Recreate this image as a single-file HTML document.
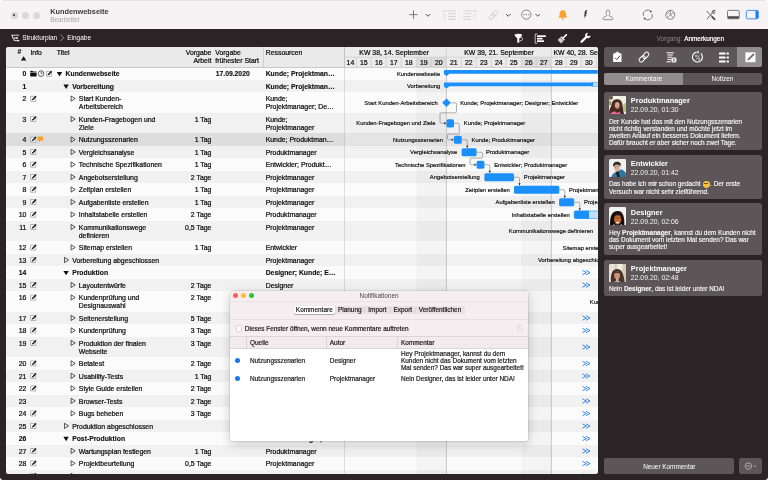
<!DOCTYPE html>
<html lang="de"><head><meta charset="utf-8"><title>Kundenwebseite</title>
<style>
*{box-sizing:border-box;margin:0;padding:0}
html,body{width:768px;height:480px;overflow:hidden;background:#fff}
body{font-family:"Liberation Sans",sans-serif;font-size:6.9px;color:#0d0d0d;position:relative;-webkit-font-smoothing:antialiased}
.a{position:absolute}
.t{position:absolute;white-space:nowrap;line-height:8.2px;height:8.2px}
.b{font-weight:bold}
#panel .b{font-size:6.8px}
#panel .t{-webkit-text-stroke:0.22px #0d0d0d}
#panel .gl{-webkit-text-stroke:0.16px #0d0d0d}
#panel .t.b{-webkit-text-stroke:0.12px #0d0d0d}
#win{will-change:transform;position:absolute;left:0;top:0;width:768px;height:480px;background:linear-gradient(#f7f2f4 0,#f7f2f4 20px,#2c2326 20px);border-radius:4.5px 4.5px 3.5px 3.5px;overflow:hidden}
#tb{position:absolute;left:0;top:0;width:768px;height:28.8px;background:#f7f2f4}
#panel{position:absolute;left:6.4px;top:46.7px;width:591.4px;height:427.5px;background:#fdfdfd;border-radius:2.5px 2.5px 3px 3px;overflow:hidden}
.row{position:absolute;left:0;width:592px}
.hd{position:absolute;top:0;background:#eaeaea;border-right:1px solid #cfcfcf;height:20.4px}
.gl{position:absolute;white-space:nowrap;font-size:5.85px;line-height:7px;height:7px;color:#0c0c0c}
.card{position:absolute;left:604.2px;width:157.7px;background:#5c5658;border-radius:2.5px;color:#f1eeef}
.card .n{position:absolute;left:26.6px;top:4.6px;font-weight:bold;font-size:7.45px;line-height:9px;color:#fff;white-space:nowrap}
.card .d{position:absolute;left:26.6px;top:13.6px;font-size:6.9px;line-height:9px;color:#f4f2f3;white-space:nowrap}
.card .x{position:absolute;left:4.7px;top:25.85px;font-size:6.43px;line-height:7.05px;white-space:nowrap;color:#f6f4f5;-webkit-text-stroke:0.15px #f6f4f5}
.card svg{position:absolute;left:4.6px;top:4.1px}
.nt{position:absolute;white-space:nowrap;font-size:6.45px;line-height:7.3px;color:#1d1a1b;-webkit-text-stroke:0.2px #1d1a1b}
</style></head><body>
<div id="win">

<div id="tb">
<div class="a" style="left:0;top:0;width:768px;height:1px;background:#e4e1e2"></div>
<div class="a" style="left:10.5px;top:11.5px;width:7px;height:7px;border-radius:50%;background:#dcd8da"></div>
<div class="a" style="left:21.5px;top:11.5px;width:7px;height:7px;border-radius:50%;background:#dcd8da"></div>
<div class="a" style="left:32.5px;top:11.5px;width:7px;height:7px;border-radius:50%;background:#dcd8da"></div>
<div class="a" style="left:13.1px;top:14.1px;width:1.8px;height:1.8px;border-radius:50%;background:#3a3638"></div>
<div class="t b" style="left:50.2px;top:7.2px;font-size:7.35px;line-height:9px;height:9px;color:#3b3739">Kundenwebseite</div>
<div class="t" style="left:50.2px;top:15.9px;font-size:6.4px;line-height:8px;height:8px;color:#a8a3a5">Bearbeitet</div>
<svg class="a" style="left:0;top:0" width="768" height="29" viewBox="0 0 768 29">
<path d="M409.3 14.6 H417.7 M413.5 10.4 V18.8" stroke="#5a5658" stroke-width="0.75" fill="none"/>
<path d="M421.5 9.5 V20" stroke="#ebe5e8" stroke-width="0.6"/>
<path d="M426.1 14.3 l2 2 l2 -2" stroke="#4a4648" stroke-width="0.95" fill="none" stroke-linecap="round" stroke-linejoin="round"/>
<g stroke="#cbc6c8" stroke-width="0.7" fill="none">
<path d="M442.2 10.9 H455.8 M448 13.7 H455.8 M448 16.5 H455.8 M448 19.3 H455.8"/>
<path d="M442.8 13.2 L445.6 16.4 L442.8 19.6"/>
<path d="M459.4 9.5 V20" stroke="#ebe5e8" stroke-width="0.6"/>
<path d="M463.2 10.9 H476.8 M463.2 13.7 H471 M463.2 16.5 H471 M463.2 19.3 H471"/>
<path d="M476.2 13.2 L473.4 16.4 L476.2 19.6"/>
</g>
<g transform="translate(493.5 15) rotate(-45)" stroke="#cbc6c8" stroke-width="0.75" fill="none">
<rect x="-5.6" y="-1.9" width="6.6" height="3.8" rx="1.9"/><rect x="-1" y="-1.9" width="6.6" height="3.8" rx="1.9"/>
</g>
<path d="M502.8 9.5 V20" stroke="#ebe5e8" stroke-width="0.6"/>
<path d="M506.3 14.3 l2 2 l2 -2" stroke="#4a4648" stroke-width="0.95" fill="none" stroke-linecap="round" stroke-linejoin="round"/>
<circle cx="526.3" cy="14.6" r="4.6" stroke="#5a5658" stroke-width="0.7" fill="none"/>
<circle cx="524.2" cy="14.6" r="0.55" fill="#5a5658"/>
<circle cx="526.3" cy="14.6" r="0.55" fill="#5a5658"/>
<circle cx="528.4" cy="14.6" r="0.55" fill="#5a5658"/>
<path d="M535.8 14.3 l2 2 l2 -2" stroke="#4a4648" stroke-width="0.95" fill="none" stroke-linecap="round" stroke-linejoin="round"/>
<path d="M562.8 10.2 C565.3 10.2 566 12.2 566 14 C566 16 566.4 16.8 567.3 17.7 L558.3 17.7 C559.2 16.8 559.6 16 559.6 14 C559.6 12.2 560.3 10.2 562.8 10.2 Z" fill="#f9a12c"/>
<path d="M561.4 18.5 H564.2 A1.4 1.3 0 0 1 561.4 18.5 Z" fill="#f9a12c"/>
<path d="M585.5 10.3 L587.4 10.3 L586.1 12.8 L587.25 12.8 L585.6 15.3 L586.6 15.3 L583.75 18.5 L584.9 15.7 L583.9 15.7 L585 13.2 L584.1 13.2 Z" fill="#3e3a3c"/>
<path d="M606.2 13.6 V11.9 A1.75 1.8 0 0 1 609.7 11.9 V13.6 C609.7 14.6 609.1 14.8 609.1 15.4 C609.1 16.7 612.9 16.5 612.9 18.7 Q612.9 19.7 611.8 19.7 H604.1 Q603 19.7 603 18.7 C603 16.5 606.8 16.7 606.8 15.4 C606.8 14.8 606.2 14.6 606.2 13.6 Z" stroke="#6a6668" stroke-width="0.7" fill="none"/>
<g stroke="#5a5658" stroke-width="0.75" fill="none">
<path d="M643.3 15.9 A4.5 4.5 0 0 1 651 11.6"/><path d="M652.2 14.1 A4.5 4.5 0 0 1 644.5 18.4"/>
</g>
<path d="M649.8 10.5 L652.3 11 L650.6 12.9 Z M645.7 19.5 L643.2 19 L644.9 17.1 Z" fill="#5a5658"/>
<circle cx="670.3" cy="14.8" r="4.5" stroke="#5a5658" stroke-width="0.7" fill="none"/>
<path d="M670.3 10.5 L670.3 14.8 L673.9 12.5 M670.3 14.8 L673.4 17.6 M670.3 14.8 L667.2 17.8 M669.2 11.5 L667 14.2" stroke="#5a5658" stroke-width="0.6" fill="none"/>
<g stroke="#4a4648" fill="none" stroke-linecap="round">
<path d="M706.9 11.2 L714.3 19" stroke-width="0.8"/>
<path d="M714.2 11 L707.2 18.8" stroke-width="0.8"/>
<path d="M712 12.3 L713 10.6 L714.9 10.4 M713.3 13.4 L715 12.5" stroke-width="0.9"/>
<path d="M712.2 16.8 L714.6 19.3" stroke-width="1.7"/>
</g>
<rect x="727.5" y="10.4" width="11.8" height="8.4" rx="1.3" stroke="#5a5658" stroke-width="0.75" fill="none"/>
<path d="M728 16.2 H738.8 V17.6 Q738.8 18.4 738 18.4 H728.8 Q728 18.4 728 17.6 Z" fill="#4a4648"/>
<rect x="746.3" y="10.4" width="12.1" height="8.4" rx="1.3" stroke="#1b7cf4" stroke-width="0.8" fill="none"/>
<path d="M755.5 10.8 H757.2 Q758 10.8 758 11.6 V17.6 Q758 18.4 757.2 18.4 H755.5 Z" fill="#1b7cf4"/>
</svg>
</div>
<svg class="a" style="left:0;top:28px" width="768" height="19" viewBox="0 28 768 19">
<g stroke="#fff" stroke-width="0.8" fill="none"><path d="M11 35.2 H19.2 M12.5 35.2 V38 H16.2 M14 38 V40.6 H17.6"/></g>
<rect x="15.8" y="37.3" width="2.2" height="1.4" fill="#fff"/><rect x="17" y="39.9" width="2.2" height="1.4" fill="#fff"/>
<path d="M60.4 34.6 L63.6 37.9 L60.4 41.2" stroke="#d8d4d6" stroke-width="0.6" fill="none"/>
<g transform="translate(0 0.6)">
<path d="M514.6 33.9 Q518.3 32.6 522 33.9 L522 35 L519.3 37.8 L519.3 42 L517.3 42.2 L517.3 37.8 L514.6 35 Z" fill="#fff"/>
<path d="M519.5 36.5 Q523 36 522.6 38.8 Q522 40.5 519.6 40.2" stroke="#fff" stroke-width="0.7" fill="none"/>
<path d="M535.2 33.4 V42.6 M535.2 33.4 H537.4 M535.2 42.6 H537.4" stroke="#fff" stroke-width="0.7" fill="none"/>
<rect x="537" y="34.7" width="8.8" height="1.7" fill="#fff"/><rect x="537" y="37.2" width="5.6" height="1.7" fill="#fff"/><rect x="537" y="39.7" width="7" height="1.7" fill="#fff"/>
<g transform="translate(562.5 38) rotate(45)"><rect x="-0.75" y="-6.2" width="1.5" height="5.4" rx="0.6" fill="#fff"/><rect x="-2.4" y="-0.9" width="4.8" height="1.5" fill="#fff"/><path d="M-2.4 1 H2.4 L2.4 4.4 L-2.4 4.4 Z" fill="#cfcbcd"/></g>
<g transform="translate(584.7 38) rotate(45)"><path d="M-1.15 -3 L-1.15 5 Q0 6.2 1.15 5 L1.15 -3 Z" fill="#fff"/><path d="M-2.6 -6 L-2.6 -3.6 Q-2.6 -2 0 -2 Q2.6 -2 2.6 -3.6 L2.6 -6 L1.1 -5.6 L1.1 -4 L-1.1 -4 L-1.1 -5.6 Z" fill="#fff"/></g>
</g>
</svg>
<div class="t" style="left:22.2px;top:34.2px;font-size:6.5px;color:#fff">Strukturplan</div>
<div class="t" style="left:67.2px;top:34.2px;font-size:6.5px;color:#fff">Eingabe</div>
<div id="panel">
<div class="row" style="top:20.7px;height:12.55px;background:#fbfbfb"></div>
<div class="row" style="top:33.2px;height:12.55px;background:#f1f1f1"></div>
<div class="row" style="top:45.7px;height:20.5px;background:#fbfbfb"></div>
<div class="row" style="top:66.15px;height:20.5px;background:#f1f1f1"></div>
<div class="row" style="top:86.6px;height:12.55px;background:#dddddd"></div>
<div class="row" style="top:99.1px;height:12.55px;background:#f1f1f1"></div>
<div class="row" style="top:111.6px;height:12.55px;background:#fbfbfb"></div>
<div class="row" style="top:124.1px;height:12.55px;background:#f1f1f1"></div>
<div class="row" style="top:136.6px;height:12.55px;background:#fbfbfb"></div>
<div class="row" style="top:149.1px;height:12.55px;background:#f1f1f1"></div>
<div class="row" style="top:161.6px;height:12.55px;background:#fbfbfb"></div>
<div class="row" style="top:174.1px;height:20.5px;background:#f1f1f1"></div>
<div class="row" style="top:194.55px;height:12.55px;background:#fbfbfb"></div>
<div class="row" style="top:207.05px;height:12.55px;background:#f1f1f1"></div>
<div class="row" style="top:219.55px;height:12.55px;background:#fbfbfb"></div>
<div class="row" style="top:232.05px;height:12.55px;background:#f1f1f1"></div>
<div class="row" style="top:244.55px;height:20.5px;background:#fbfbfb"></div>
<div class="row" style="top:265px;height:12.55px;background:#f1f1f1"></div>
<div class="row" style="top:277.5px;height:12.55px;background:#fbfbfb"></div>
<div class="row" style="top:290px;height:20.5px;background:#f1f1f1"></div>
<div class="row" style="top:310.45px;height:12.55px;background:#fbfbfb"></div>
<div class="row" style="top:322.95px;height:12.55px;background:#f1f1f1"></div>
<div class="row" style="top:335.45px;height:12.55px;background:#fbfbfb"></div>
<div class="row" style="top:347.95px;height:12.55px;background:#f1f1f1"></div>
<div class="row" style="top:360.45px;height:12.55px;background:#fbfbfb"></div>
<div class="row" style="top:372.95px;height:12.55px;background:#f1f1f1"></div>
<div class="row" style="top:385.45px;height:12.55px;background:#fbfbfb"></div>
<div class="row" style="top:397.95px;height:12.55px;background:#f1f1f1"></div>
<div class="row" style="top:410.45px;height:12.55px;background:#fbfbfb"></div>
<div class="row" style="top:422.95px;height:12.55px;background:#f1f1f1"></div>

<div class="hd" style="left:0px;width:22.4px"></div>
<div class="hd" style="left:21.9px;width:26.5px"></div>
<div class="hd" style="left:47.9px;width:110.7px"></div>
<div class="hd" style="left:158.1px;width:49.4px"></div>
<div class="hd" style="left:207px;width:50.9px"></div>
<div class="hd" style="left:257.4px;width:81.2px"></div>
<div class="a" style="left:0;top:20.4px;width:592px;height:0.6px;background:#c9c9c9"></div>
<div class="t b" style="left:11.2px;top:1.6px;">#</div>
<div class="t " style="left:24px;top:2px;">Info</div>
<div class="t " style="left:50.4px;top:2px;">Titel</div>
<div class="t " style="right:386.4px;top:2px;">Vorgabe</div>
<div class="t " style="right:386.4px;top:10.3px;">Arbeit</div>
<div class="t " style="left:208.9px;top:2px;">Vorgabe</div>
<div class="t " style="left:208.9px;top:10.3px;">frühester Start</div>
<div class="t " style="left:259.3px;top:2px;">Ressourcen</div>
<div class="t b" style="right:571.4px;top:23.6px;">0</div>
<div class="t b" style="left:59.2px;top:23.6px;">Kundenwebseite</div>
<div class="t b" style="left:209.3px;top:23.6px;">17.09.2020</div>
<div class="t b" style="left:259.3px;top:23.6px;">Kunde; Projektman…</div>
<div class="t b" style="right:571.4px;top:36.1px;">1</div>
<div class="t b" style="left:65.8px;top:36.1px;">Vorbereitung</div>
<div class="t b" style="left:259.3px;top:36.1px;">Kunde; Projektman…</div>
<div class="t " style="right:571.4px;top:48.6px;">2</div>
<div class="t " style="left:72.4px;top:48.6px;">Start Kunden-</div>
<div class="t " style="left:72.4px;top:56.8px;">Arbeitsbereich</div>
<div class="t " style="left:259.3px;top:48.6px;">Kunde;</div>
<div class="t " style="left:259.3px;top:56.8px;">Projektmanager; De…</div>
<div class="t " style="right:571.4px;top:69.05px;">3</div>
<div class="t " style="left:72.4px;top:69.05px;">Kunden-Fragebogen und</div>
<div class="t " style="left:72.4px;top:77.25px;">Ziele</div>
<div class="t " style="right:386.4px;top:69.05px;">1 Tag</div>
<div class="t " style="left:259.3px;top:69.05px;">Kunde;</div>
<div class="t " style="left:259.3px;top:77.25px;">Projektmanager</div>
<div class="t " style="right:571.4px;top:89.5px;">4</div>
<div class="t " style="left:72.4px;top:89.5px;">Nutzungsszenarien</div>
<div class="t " style="right:386.4px;top:89.5px;">1 Tag</div>
<div class="t " style="left:259.3px;top:89.5px;">Kunde; Produktman…</div>
<div class="t " style="right:571.4px;top:102px;">5</div>
<div class="t " style="left:72.4px;top:102px;">Vergleichsanalyse</div>
<div class="t " style="right:386.4px;top:102px;">1 Tag</div>
<div class="t " style="left:259.3px;top:102px;">Produktmanager</div>
<div class="t " style="right:571.4px;top:114.5px;">6</div>
<div class="t " style="left:72.4px;top:114.5px;">Technische Spezifikationen</div>
<div class="t " style="right:386.4px;top:114.5px;">1 Tag</div>
<div class="t " style="left:259.3px;top:114.5px;">Entwickler; Produkt…</div>
<div class="t " style="right:571.4px;top:127px;">7</div>
<div class="t " style="left:72.4px;top:127px;">Angebotserstellung</div>
<div class="t " style="right:386.4px;top:127px;">2 Tage</div>
<div class="t " style="left:259.3px;top:127px;">Projektmanager</div>
<div class="t " style="right:571.4px;top:139.5px;">8</div>
<div class="t " style="left:72.4px;top:139.5px;">Zeitplan erstellen</div>
<div class="t " style="right:386.4px;top:139.5px;">1 Tag</div>
<div class="t " style="left:259.3px;top:139.5px;">Projektmanager</div>
<div class="t " style="right:571.4px;top:152px;">9</div>
<div class="t " style="left:72.4px;top:152px;">Aufgabenliste erstellen</div>
<div class="t " style="right:386.4px;top:152px;">1 Tag</div>
<div class="t " style="left:259.3px;top:152px;">Projektmanager</div>
<div class="t " style="right:571.4px;top:164.5px;">10</div>
<div class="t " style="left:72.4px;top:164.5px;">Inhaltstabelle erstellen</div>
<div class="t " style="right:386.4px;top:164.5px;">2 Tage</div>
<div class="t " style="left:259.3px;top:164.5px;">Produktmanager</div>
<div class="t " style="right:571.4px;top:177px;">11</div>
<div class="t " style="left:72.4px;top:177px;">Kommunikationswege</div>
<div class="t " style="left:72.4px;top:185.2px;">definieren</div>
<div class="t " style="right:386.4px;top:177px;">0,5 Tage</div>
<div class="t " style="left:259.3px;top:177px;">Projektmanager</div>
<div class="t " style="right:571.4px;top:197.45px;">12</div>
<div class="t " style="left:72.4px;top:197.45px;">Sitemap erstellen</div>
<div class="t " style="right:386.4px;top:197.45px;">1 Tag</div>
<div class="t " style="left:259.3px;top:197.45px;">Entwickler</div>
<div class="t " style="right:571.4px;top:209.95px;">13</div>
<div class="t " style="left:65.8px;top:209.95px;">Vorbereitung abgeschlossen</div>
<div class="t " style="left:259.3px;top:209.95px;">Projektmanager</div>
<div class="t b" style="right:571.4px;top:222.45px;">14</div>
<div class="t b" style="left:65.8px;top:222.45px;">Produktion</div>
<div class="t b" style="left:259.3px;top:222.45px;">Designer; Kunde; E…</div>
<div class="t " style="right:571.4px;top:234.95px;">15</div>
<div class="t " style="left:72.4px;top:234.95px;">Layoutentwürfe</div>
<div class="t " style="right:386.4px;top:234.95px;">2 Tage</div>
<div class="t " style="left:259.3px;top:234.95px;">Designer</div>
<div class="t " style="right:571.4px;top:247.45px;">16</div>
<div class="t " style="left:72.4px;top:247.45px;">Kundenprüfung und</div>
<div class="t " style="left:72.4px;top:255.65px;">Designauswahl</div>
<div class="t " style="right:386.4px;top:247.45px;">2 Tage</div>
<div class="t " style="left:259.3px;top:247.45px;">Kunde</div>
<div class="t " style="right:571.4px;top:267.9px;">17</div>
<div class="t " style="left:72.4px;top:267.9px;">Seitenerstellung</div>
<div class="t " style="right:386.4px;top:267.9px;">5 Tage</div>
<div class="t " style="left:259.3px;top:267.9px;">Entwickler</div>
<div class="t " style="right:571.4px;top:280.4px;">18</div>
<div class="t " style="left:72.4px;top:280.4px;">Kundenprüfung</div>
<div class="t " style="right:386.4px;top:280.4px;">3 Tage</div>
<div class="t " style="left:259.3px;top:280.4px;">Kunde</div>
<div class="t " style="right:571.4px;top:292.9px;">19</div>
<div class="t " style="left:72.4px;top:292.9px;">Produktion der finalen</div>
<div class="t " style="left:72.4px;top:301.1px;">Webseite</div>
<div class="t " style="right:386.4px;top:292.9px;">3 Tage</div>
<div class="t " style="left:259.3px;top:292.9px;">Entwickler</div>
<div class="t " style="right:571.4px;top:313.35px;">20</div>
<div class="t " style="left:72.4px;top:313.35px;">Betatest</div>
<div class="t " style="right:386.4px;top:313.35px;">2 Tage</div>
<div class="t " style="left:259.3px;top:313.35px;">Kunde</div>
<div class="t " style="right:571.4px;top:325.85px;">21</div>
<div class="t " style="left:72.4px;top:325.85px;">Usability-Tests</div>
<div class="t " style="right:386.4px;top:325.85px;">1 Tag</div>
<div class="t " style="left:259.3px;top:325.85px;">Designer</div>
<div class="t " style="right:571.4px;top:338.35px;">22</div>
<div class="t " style="left:72.4px;top:338.35px;">Style Guide erstellen</div>
<div class="t " style="right:386.4px;top:338.35px;">2 Tage</div>
<div class="t " style="left:259.3px;top:338.35px;">Designer</div>
<div class="t " style="right:571.4px;top:350.85px;">23</div>
<div class="t " style="left:72.4px;top:350.85px;">Browser-Tests</div>
<div class="t " style="right:386.4px;top:350.85px;">2 Tage</div>
<div class="t " style="left:259.3px;top:350.85px;">Entwickler</div>
<div class="t " style="right:571.4px;top:363.35px;">24</div>
<div class="t " style="left:72.4px;top:363.35px;">Bugs beheben</div>
<div class="t " style="right:386.4px;top:363.35px;">3 Tage</div>
<div class="t " style="left:259.3px;top:363.35px;">Entwickler</div>
<div class="t " style="right:571.4px;top:375.85px;">25</div>
<div class="t " style="left:65.8px;top:375.85px;">Produktion abgeschlossen</div>
<div class="t " style="left:259.3px;top:375.85px;">Projektmanager</div>
<div class="t b" style="right:571.4px;top:388.35px;">26</div>
<div class="t b" style="left:65.8px;top:388.35px;">Post-Produktion</div>
<div class="t b" style="left:259.3px;top:388.35px;">Produktmanager; Pr…</div>
<div class="t " style="right:571.4px;top:400.85px;">27</div>
<div class="t " style="left:72.4px;top:400.85px;">Wartungsplan festlegen</div>
<div class="t " style="right:386.4px;top:400.85px;">1 Tag</div>
<div class="t " style="left:259.3px;top:400.85px;">Produktmanager</div>
<div class="t " style="right:571.4px;top:413.35px;">28</div>
<div class="t " style="left:72.4px;top:413.35px;">Projektbeurteilung</div>
<div class="t " style="right:386.4px;top:413.35px;">0,5 Tage</div>
<div class="t " style="left:259.3px;top:413.35px;">Projektmanager</div>
<div class="t " style="right:571.4px;top:425.85px;">29</div>
<div class="t " style="left:72.4px;top:425.85px;">Finale Präsentation</div>
<div class="t " style="right:386.4px;top:425.85px;">0,5 Tage</div>
<div class="t " style="left:259.3px;top:425.85px;">Kunde; Projektmana…</div>
<svg class="a" style="left:-0.4px;top:-0.7px" width="346" height="430" viewBox="6 46 346 430">
<g transform="translate(20.6 55.8) scale(1)"><path d="M0.3 4.6 L3 0.4 L5.7 4.6 Z" fill="#111"/></g>
<g transform="translate(56.5 71.8) scale(1)"><path d="M0.3 0.3 L5.7 0.3 L3 4.7 Z" fill="#111"/></g>
<g transform="translate(46 70.3) scale(0.1)"><rect x="5" y="9" width="50" height="50" fill="#fff" stroke="#8a8a8a" stroke-width="6"/><path d="M14 50 L20 36 L52 4 L62 14 L30 46 Z" fill="#111"/></g>
<g transform="translate(30 70.6) scale(0.1)"><path d="M2 6 Q2 2 6 2 L24 2 L30 9 L62 9 Q66 9 66 13 L66 18 L2 18 Z M2 23 L66 23 L66 54 Q66 58 62 58 L6 58 Q2 58 2 54 Z" fill="#111"/></g>
<g transform="translate(37.8 70.3) scale(0.1)"><circle cx="33" cy="33" r="28" fill="#fff" stroke="#111" stroke-width="7"/><path d="M33 33 L33 16 M33 33 L47 27" stroke="#111" stroke-width="6" fill="none"/></g>
<g transform="translate(63.1 84.3) scale(1)"><path d="M0.3 0.3 L5.7 0.3 L3 4.7 Z" fill="#111"/></g>
<g transform="translate(70.2 95.1) scale(1)"><path d="M0.9 0.9 L5 3.5 L0.9 6.1 Z" fill="none" stroke="#222" stroke-width="0.75" stroke-linejoin="round"/></g>
<g transform="translate(30.3 95.3) scale(0.1)"><rect x="5" y="9" width="50" height="50" fill="#fff" stroke="#8a8a8a" stroke-width="6"/><path d="M14 50 L20 36 L52 4 L62 14 L30 46 Z" fill="#111"/></g>
<g transform="translate(70.2 115.55) scale(1)"><path d="M0.9 0.9 L5 3.5 L0.9 6.1 Z" fill="none" stroke="#222" stroke-width="0.75" stroke-linejoin="round"/></g>
<g transform="translate(30.3 115.75) scale(0.1)"><rect x="5" y="9" width="50" height="50" fill="#fff" stroke="#8a8a8a" stroke-width="6"/><path d="M14 50 L20 36 L52 4 L62 14 L30 46 Z" fill="#111"/></g>
<g transform="translate(70.2 136) scale(1)"><path d="M0.9 0.9 L5 3.5 L0.9 6.1 Z" fill="none" stroke="#222" stroke-width="0.75" stroke-linejoin="round"/></g>
<g transform="translate(30.3 136.2) scale(0.1)"><rect x="5" y="9" width="50" height="50" fill="#fff" stroke="#8a8a8a" stroke-width="6"/><path d="M14 50 L20 36 L52 4 L62 14 L30 46 Z" fill="#111"/></g>
<g transform="translate(37.3 136.4) scale(0.105)"><path d="M6 2 L52 2 Q56 2 56 6 L56 38 Q56 42 52 42 L30 42 L16 58 L16 42 L6 42 Q2 42 2 38 L2 6 Q2 2 6 2 Z" fill="#f9a12c"/></g>
<g transform="translate(70.2 148.5) scale(1)"><path d="M0.9 0.9 L5 3.5 L0.9 6.1 Z" fill="none" stroke="#222" stroke-width="0.75" stroke-linejoin="round"/></g>
<g transform="translate(30.3 148.7) scale(0.1)"><rect x="5" y="9" width="50" height="50" fill="#fff" stroke="#8a8a8a" stroke-width="6"/><path d="M14 50 L20 36 L52 4 L62 14 L30 46 Z" fill="#111"/></g>
<g transform="translate(70.2 161) scale(1)"><path d="M0.9 0.9 L5 3.5 L0.9 6.1 Z" fill="none" stroke="#222" stroke-width="0.75" stroke-linejoin="round"/></g>
<g transform="translate(30.3 161.2) scale(0.1)"><rect x="5" y="9" width="50" height="50" fill="#fff" stroke="#8a8a8a" stroke-width="6"/><path d="M14 50 L20 36 L52 4 L62 14 L30 46 Z" fill="#111"/></g>
<g transform="translate(70.2 173.5) scale(1)"><path d="M0.9 0.9 L5 3.5 L0.9 6.1 Z" fill="none" stroke="#222" stroke-width="0.75" stroke-linejoin="round"/></g>
<g transform="translate(30.3 173.7) scale(0.1)"><rect x="5" y="9" width="50" height="50" fill="#fff" stroke="#8a8a8a" stroke-width="6"/><path d="M14 50 L20 36 L52 4 L62 14 L30 46 Z" fill="#111"/></g>
<g transform="translate(70.2 186) scale(1)"><path d="M0.9 0.9 L5 3.5 L0.9 6.1 Z" fill="none" stroke="#222" stroke-width="0.75" stroke-linejoin="round"/></g>
<g transform="translate(30.3 186.2) scale(0.1)"><rect x="5" y="9" width="50" height="50" fill="#fff" stroke="#8a8a8a" stroke-width="6"/><path d="M14 50 L20 36 L52 4 L62 14 L30 46 Z" fill="#111"/></g>
<g transform="translate(70.2 198.5) scale(1)"><path d="M0.9 0.9 L5 3.5 L0.9 6.1 Z" fill="none" stroke="#222" stroke-width="0.75" stroke-linejoin="round"/></g>
<g transform="translate(30.3 198.7) scale(0.1)"><rect x="5" y="9" width="50" height="50" fill="#fff" stroke="#8a8a8a" stroke-width="6"/><path d="M14 50 L20 36 L52 4 L62 14 L30 46 Z" fill="#111"/></g>
<g transform="translate(70.2 211) scale(1)"><path d="M0.9 0.9 L5 3.5 L0.9 6.1 Z" fill="none" stroke="#222" stroke-width="0.75" stroke-linejoin="round"/></g>
<g transform="translate(30.3 211.2) scale(0.1)"><rect x="5" y="9" width="50" height="50" fill="#fff" stroke="#8a8a8a" stroke-width="6"/><path d="M14 50 L20 36 L52 4 L62 14 L30 46 Z" fill="#111"/></g>
<g transform="translate(70.2 223.5) scale(1)"><path d="M0.9 0.9 L5 3.5 L0.9 6.1 Z" fill="none" stroke="#222" stroke-width="0.75" stroke-linejoin="round"/></g>
<g transform="translate(30.3 223.7) scale(0.1)"><rect x="5" y="9" width="50" height="50" fill="#fff" stroke="#8a8a8a" stroke-width="6"/><path d="M14 50 L20 36 L52 4 L62 14 L30 46 Z" fill="#111"/></g>
<g transform="translate(70.2 243.95) scale(1)"><path d="M0.9 0.9 L5 3.5 L0.9 6.1 Z" fill="none" stroke="#222" stroke-width="0.75" stroke-linejoin="round"/></g>
<g transform="translate(30.3 244.15) scale(0.1)"><rect x="5" y="9" width="50" height="50" fill="#fff" stroke="#8a8a8a" stroke-width="6"/><path d="M14 50 L20 36 L52 4 L62 14 L30 46 Z" fill="#111"/></g>
<g transform="translate(63.6 256.45) scale(1)"><path d="M0.9 0.9 L5 3.5 L0.9 6.1 Z" fill="none" stroke="#222" stroke-width="0.75" stroke-linejoin="round"/></g>
<g transform="translate(30.3 256.65) scale(0.1)"><rect x="5" y="9" width="50" height="50" fill="#fff" stroke="#8a8a8a" stroke-width="6"/><path d="M14 50 L20 36 L52 4 L62 14 L30 46 Z" fill="#111"/></g>
<g transform="translate(63.1 270.65) scale(1)"><path d="M0.3 0.3 L5.7 0.3 L3 4.7 Z" fill="#111"/></g>
<g transform="translate(70.2 281.45) scale(1)"><path d="M0.9 0.9 L5 3.5 L0.9 6.1 Z" fill="none" stroke="#222" stroke-width="0.75" stroke-linejoin="round"/></g>
<g transform="translate(30.3 281.65) scale(0.1)"><rect x="5" y="9" width="50" height="50" fill="#fff" stroke="#8a8a8a" stroke-width="6"/><path d="M14 50 L20 36 L52 4 L62 14 L30 46 Z" fill="#111"/></g>
<g transform="translate(70.2 293.95) scale(1)"><path d="M0.9 0.9 L5 3.5 L0.9 6.1 Z" fill="none" stroke="#222" stroke-width="0.75" stroke-linejoin="round"/></g>
<g transform="translate(30.3 294.15) scale(0.1)"><rect x="5" y="9" width="50" height="50" fill="#fff" stroke="#8a8a8a" stroke-width="6"/><path d="M14 50 L20 36 L52 4 L62 14 L30 46 Z" fill="#111"/></g>
<g transform="translate(70.2 314.4) scale(1)"><path d="M0.9 0.9 L5 3.5 L0.9 6.1 Z" fill="none" stroke="#222" stroke-width="0.75" stroke-linejoin="round"/></g>
<g transform="translate(30.3 314.6) scale(0.1)"><rect x="5" y="9" width="50" height="50" fill="#fff" stroke="#8a8a8a" stroke-width="6"/><path d="M14 50 L20 36 L52 4 L62 14 L30 46 Z" fill="#111"/></g>
<g transform="translate(70.2 326.9) scale(1)"><path d="M0.9 0.9 L5 3.5 L0.9 6.1 Z" fill="none" stroke="#222" stroke-width="0.75" stroke-linejoin="round"/></g>
<g transform="translate(30.3 327.1) scale(0.1)"><rect x="5" y="9" width="50" height="50" fill="#fff" stroke="#8a8a8a" stroke-width="6"/><path d="M14 50 L20 36 L52 4 L62 14 L30 46 Z" fill="#111"/></g>
<g transform="translate(70.2 339.4) scale(1)"><path d="M0.9 0.9 L5 3.5 L0.9 6.1 Z" fill="none" stroke="#222" stroke-width="0.75" stroke-linejoin="round"/></g>
<g transform="translate(30.3 339.6) scale(0.1)"><rect x="5" y="9" width="50" height="50" fill="#fff" stroke="#8a8a8a" stroke-width="6"/><path d="M14 50 L20 36 L52 4 L62 14 L30 46 Z" fill="#111"/></g>
<g transform="translate(70.2 359.85) scale(1)"><path d="M0.9 0.9 L5 3.5 L0.9 6.1 Z" fill="none" stroke="#222" stroke-width="0.75" stroke-linejoin="round"/></g>
<g transform="translate(30.3 360.05) scale(0.1)"><rect x="5" y="9" width="50" height="50" fill="#fff" stroke="#8a8a8a" stroke-width="6"/><path d="M14 50 L20 36 L52 4 L62 14 L30 46 Z" fill="#111"/></g>
<g transform="translate(70.2 372.35) scale(1)"><path d="M0.9 0.9 L5 3.5 L0.9 6.1 Z" fill="none" stroke="#222" stroke-width="0.75" stroke-linejoin="round"/></g>
<g transform="translate(30.3 372.55) scale(0.1)"><rect x="5" y="9" width="50" height="50" fill="#fff" stroke="#8a8a8a" stroke-width="6"/><path d="M14 50 L20 36 L52 4 L62 14 L30 46 Z" fill="#111"/></g>
<g transform="translate(70.2 384.85) scale(1)"><path d="M0.9 0.9 L5 3.5 L0.9 6.1 Z" fill="none" stroke="#222" stroke-width="0.75" stroke-linejoin="round"/></g>
<g transform="translate(30.3 385.05) scale(0.1)"><rect x="5" y="9" width="50" height="50" fill="#fff" stroke="#8a8a8a" stroke-width="6"/><path d="M14 50 L20 36 L52 4 L62 14 L30 46 Z" fill="#111"/></g>
<g transform="translate(70.2 397.35) scale(1)"><path d="M0.9 0.9 L5 3.5 L0.9 6.1 Z" fill="none" stroke="#222" stroke-width="0.75" stroke-linejoin="round"/></g>
<g transform="translate(70.2 409.85) scale(1)"><path d="M0.9 0.9 L5 3.5 L0.9 6.1 Z" fill="none" stroke="#222" stroke-width="0.75" stroke-linejoin="round"/></g>
<g transform="translate(30.3 410.05) scale(0.1)"><rect x="5" y="9" width="50" height="50" fill="#fff" stroke="#8a8a8a" stroke-width="6"/><path d="M14 50 L20 36 L52 4 L62 14 L30 46 Z" fill="#111"/></g>
<g transform="translate(63.6 422.35) scale(1)"><path d="M0.9 0.9 L5 3.5 L0.9 6.1 Z" fill="none" stroke="#222" stroke-width="0.75" stroke-linejoin="round"/></g>
<g transform="translate(30.3 422.55) scale(0.1)"><rect x="5" y="9" width="50" height="50" fill="#fff" stroke="#8a8a8a" stroke-width="6"/><path d="M14 50 L20 36 L52 4 L62 14 L30 46 Z" fill="#111"/></g>
<g transform="translate(63.1 436.55) scale(1)"><path d="M0.3 0.3 L5.7 0.3 L3 4.7 Z" fill="#111"/></g>
<g transform="translate(70.2 447.35) scale(1)"><path d="M0.9 0.9 L5 3.5 L0.9 6.1 Z" fill="none" stroke="#222" stroke-width="0.75" stroke-linejoin="round"/></g>
<g transform="translate(30.3 447.55) scale(0.1)"><rect x="5" y="9" width="50" height="50" fill="#fff" stroke="#8a8a8a" stroke-width="6"/><path d="M14 50 L20 36 L52 4 L62 14 L30 46 Z" fill="#111"/></g>
<g transform="translate(70.2 459.85) scale(1)"><path d="M0.9 0.9 L5 3.5 L0.9 6.1 Z" fill="none" stroke="#222" stroke-width="0.75" stroke-linejoin="round"/></g>
<g transform="translate(30.3 460.05) scale(0.1)"><rect x="5" y="9" width="50" height="50" fill="#fff" stroke="#8a8a8a" stroke-width="6"/><path d="M14 50 L20 36 L52 4 L62 14 L30 46 Z" fill="#111"/></g>
<g transform="translate(70.2 472.35) scale(1)"><path d="M0.9 0.9 L5 3.5 L0.9 6.1 Z" fill="none" stroke="#222" stroke-width="0.75" stroke-linejoin="round"/></g>
<g transform="translate(30.3 472.55) scale(0.1)"><rect x="5" y="9" width="50" height="50" fill="#fff" stroke="#8a8a8a" stroke-width="6"/><path d="M14 50 L20 36 L52 4 L62 14 L30 46 Z" fill="#111"/></g>
</svg>
<svg class="a" style="left:-0.4px;top:-0.7px" width="592" height="429" viewBox="6 46 592 429">
<defs><clipPath id="gc"><rect x="344.5" y="46.7" width="253.3" height="430"/></clipPath></defs>
<g clip-path="url(#gc)">
<rect x="416.25" y="67.4" width="30" height="410" fill="#000" fill-opacity="0.028"/>
<rect x="521.25" y="67.4" width="30" height="410" fill="#000" fill-opacity="0.028"/>
<rect x="344.5" y="133.3" width="260" height="12.5" fill="#fff" fill-opacity="0.22"/>
<rect x="344.5" y="46.7" width="260" height="21.1" fill="#ebebeb"/>
<rect x="416.25" y="57.2" width="30" height="10.2" fill="#dbdbdb"/>
<rect x="521.25" y="57.2" width="30" height="10.2" fill="#dbdbdb"/>
<path d="M344.5 57.2 H600" stroke="#c8c8c8" stroke-width="0.6"/>
<path d="M344.5 67.4 H600" stroke="#c4c4c4" stroke-width="0.6"/>
<path d="M356.25 57.2 V67.4" stroke="#c4c4c4" stroke-width="0.6"/>
<path d="M371.25 57.2 V67.4" stroke="#c4c4c4" stroke-width="0.6"/>
<path d="M386.25 57.2 V67.4" stroke="#c4c4c4" stroke-width="0.6"/>
<path d="M401.25 57.2 V67.4" stroke="#c4c4c4" stroke-width="0.6"/>
<path d="M416.25 57.2 V67.4" stroke="#c4c4c4" stroke-width="0.6"/>
<path d="M431.25 57.2 V67.4" stroke="#c4c4c4" stroke-width="0.6"/>
<path d="M446.25 46.7 V67.4" stroke="#c4c4c4" stroke-width="0.6"/>
<path d="M461.25 57.2 V67.4" stroke="#c4c4c4" stroke-width="0.6"/>
<path d="M476.25 57.2 V67.4" stroke="#c4c4c4" stroke-width="0.6"/>
<path d="M491.25 57.2 V67.4" stroke="#c4c4c4" stroke-width="0.6"/>
<path d="M506.25 57.2 V67.4" stroke="#c4c4c4" stroke-width="0.6"/>
<path d="M521.25 57.2 V67.4" stroke="#c4c4c4" stroke-width="0.6"/>
<path d="M536.25 57.2 V67.4" stroke="#c4c4c4" stroke-width="0.6"/>
<path d="M551.25 46.7 V67.4" stroke="#c4c4c4" stroke-width="0.6"/>
<path d="M566.25 57.2 V67.4" stroke="#c4c4c4" stroke-width="0.6"/>
<path d="M581.25 57.2 V67.4" stroke="#c4c4c4" stroke-width="0.6"/>
<path d="M596.25 57.2 V67.4" stroke="#c4c4c4" stroke-width="0.6"/>
<path d="M446.4 67.4 V480" stroke="#a6a6a6" stroke-width="0.6"/>
<path d="M551.4 67.4 V480" stroke="#a6a6a6" stroke-width="0.6"/>
<path d="M344.5 46.7 V480" stroke="#a2a2a2" stroke-width="0.65"/>
<path d="M443.8 71.2 Q443.8 70 445 70 H610 V73.7 H449.4 L446.8 76.1 L444 74.3 Z" fill="#1b90fb"/>
<rect x="592" y="82.5" width="18" height="3.7" fill="#c3dbf7" stroke="#1b90fb" stroke-width="0.5"/>
<path d="M443.8 83.7 Q443.8 82.5 445 82.5 H593 V86.2 H449.4 L446.8 88.6 L444 86.8 Z" fill="#1b90fb"/>
<path d="M450.3 102.83 H455.3 Q456.5 102.83 456.5 104.03 V111.6 Q456.5 112.8 455.3 112.8 H441.2 Q440 112.8 440 114 V122.08 Q440 123.28 441.2 123.28 H445.5" stroke="#7a7a7a" stroke-width="0.6" fill="none" stroke-linejoin="round"/>
<path d="M446.5 123.28 l-2.3 -1.2 v2.4 Z" fill="#333"/>
<path d="M454 123.28 H458.1 Q459.3 123.28 459.3 124.48 V132.8 Q459.3 134 458.1 134 H448.7 Q447.5 134 447.5 135.2 V138.55 Q447.5 139.75 448.7 139.75 H453" stroke="#7a7a7a" stroke-width="0.6" fill="none" stroke-linejoin="round"/>
<path d="M454 139.75 l-2.3 -1.2 v2.4 Z" fill="#333"/>
<path d="M461.8 139.75 H466.1 Q467.3 139.75 467.3 140.95 V147.15" stroke="#7a7a7a" stroke-width="0.6" fill="none" stroke-linejoin="round"/>
<path d="M467.3 148.15 l-1.2 -2.3 h2.4 Z" fill="#333"/>
<path d="M476.6 152.25 H481.3 Q482.5 152.25 482.5 153.45 V156.9 Q482.5 158.1 481.3 158.1 H471.2 Q470 158.1 470 159.3 V163.55 Q470 164.75 471.2 164.75 H475.6" stroke="#7a7a7a" stroke-width="0.6" fill="none" stroke-linejoin="round"/>
<path d="M476.6 164.75 l-2.3 -1.2 v2.4 Z" fill="#333"/>
<path d="M484.4 164.75 H488.6 Q489.8 164.75 489.8 165.95 V172.15" stroke="#7a7a7a" stroke-width="0.6" fill="none" stroke-linejoin="round"/>
<path d="M489.8 173.15 l-1.2 -2.3 h2.4 Z" fill="#333"/>
<path d="M514 177.25 H518.3 Q519.5 177.25 519.5 178.45 V184.65" stroke="#7a7a7a" stroke-width="0.6" fill="none" stroke-linejoin="round"/>
<path d="M519.5 185.65 l-1.2 -2.3 h2.4 Z" fill="#333"/>
<path d="M559.2 189.75 H563.6 Q564.8 189.75 564.8 190.95 V197.15" stroke="#7a7a7a" stroke-width="0.6" fill="none" stroke-linejoin="round"/>
<path d="M564.8 198.15 l-1.2 -2.3 h2.4 Z" fill="#333"/>
<path d="M574.2 202.25 H578.5 Q579.7 202.25 579.7 203.45 V209.65" stroke="#7a7a7a" stroke-width="0.6" fill="none" stroke-linejoin="round"/>
<path d="M579.7 210.65 l-1.2 -2.3 h2.4 Z" fill="#333"/>
<path d="M446.5 98.53 L450.8 102.73 L446.5 106.93 L442.2 102.73 Z" fill="#1b90fb"/>
<rect x="446.5" y="119.18" width="7.5" height="8.2" rx="1.6" fill="#1b90fb"/>
<rect x="454" y="135.65" width="7.8" height="8.2" rx="1.6" fill="#1b90fb"/>
<rect x="461.6" y="148.15" width="15" height="8.2" rx="1.6" fill="#1b90fb"/>
<rect x="476.6" y="160.65" width="7.8" height="8.2" rx="1.6" fill="#1b90fb"/>
<rect x="484.4" y="173.15" width="29.6" height="8.2" rx="1.6" fill="#1b90fb"/>
<rect x="514" y="185.65" width="45.3" height="8.2" rx="1.6" fill="#1b90fb"/>
<rect x="559.1" y="198.15" width="15.1" height="8.2" rx="1.6" fill="#1b90fb"/>
<rect x="574.2" y="210.95" width="40" height="7.6" rx="1.6" fill="#c3dbf7" stroke="#1b90fb" stroke-width="0.6"/>
<path d="M575.8 210.65 H589 V218.85 H575.8 Q574.2 218.85 574.2 217.25 V212.25 Q574.2 210.65 575.8 210.65 Z" fill="#1b90fb"/>
<path d="M582.5 270.45 l3.9 2.15 l-3.9 2.15" stroke="#1f77e6" stroke-width="0.9" fill="none"/>
<path d="M586.1 270.45 l3.9 2.15 l-3.9 2.15" stroke="#1f77e6" stroke-width="0.9" fill="none"/>
<path d="M582.5 282.95 l3.9 2.15 l-3.9 2.15" stroke="#1f77e6" stroke-width="0.9" fill="none"/>
<path d="M586.1 282.95 l3.9 2.15 l-3.9 2.15" stroke="#1f77e6" stroke-width="0.9" fill="none"/>
<path d="M582.5 315.9 l3.9 2.15 l-3.9 2.15" stroke="#1f77e6" stroke-width="0.9" fill="none"/>
<path d="M586.1 315.9 l3.9 2.15 l-3.9 2.15" stroke="#1f77e6" stroke-width="0.9" fill="none"/>
<path d="M582.5 328.4 l3.9 2.15 l-3.9 2.15" stroke="#1f77e6" stroke-width="0.9" fill="none"/>
<path d="M586.1 328.4 l3.9 2.15 l-3.9 2.15" stroke="#1f77e6" stroke-width="0.9" fill="none"/>
<path d="M582.5 344.88 l3.9 2.15 l-3.9 2.15" stroke="#1f77e6" stroke-width="0.9" fill="none"/>
<path d="M586.1 344.88 l3.9 2.15 l-3.9 2.15" stroke="#1f77e6" stroke-width="0.9" fill="none"/>
<path d="M582.5 361.35 l3.9 2.15 l-3.9 2.15" stroke="#1f77e6" stroke-width="0.9" fill="none"/>
<path d="M586.1 361.35 l3.9 2.15 l-3.9 2.15" stroke="#1f77e6" stroke-width="0.9" fill="none"/>
<path d="M582.5 373.85 l3.9 2.15 l-3.9 2.15" stroke="#1f77e6" stroke-width="0.9" fill="none"/>
<path d="M586.1 373.85 l3.9 2.15 l-3.9 2.15" stroke="#1f77e6" stroke-width="0.9" fill="none"/>
<path d="M582.5 386.35 l3.9 2.15 l-3.9 2.15" stroke="#1f77e6" stroke-width="0.9" fill="none"/>
<path d="M586.1 386.35 l3.9 2.15 l-3.9 2.15" stroke="#1f77e6" stroke-width="0.9" fill="none"/>
<path d="M582.5 398.85 l3.9 2.15 l-3.9 2.15" stroke="#1f77e6" stroke-width="0.9" fill="none"/>
<path d="M586.1 398.85 l3.9 2.15 l-3.9 2.15" stroke="#1f77e6" stroke-width="0.9" fill="none"/>
<path d="M582.5 411.35 l3.9 2.15 l-3.9 2.15" stroke="#1f77e6" stroke-width="0.9" fill="none"/>
<path d="M586.1 411.35 l3.9 2.15 l-3.9 2.15" stroke="#1f77e6" stroke-width="0.9" fill="none"/>
<path d="M582.5 423.85 l3.9 2.15 l-3.9 2.15" stroke="#1f77e6" stroke-width="0.9" fill="none"/>
<path d="M586.1 423.85 l3.9 2.15 l-3.9 2.15" stroke="#1f77e6" stroke-width="0.9" fill="none"/>
<path d="M582.5 436.35 l3.9 2.15 l-3.9 2.15" stroke="#1f77e6" stroke-width="0.9" fill="none"/>
<path d="M586.1 436.35 l3.9 2.15 l-3.9 2.15" stroke="#1f77e6" stroke-width="0.9" fill="none"/>
<path d="M582.5 448.85 l3.9 2.15 l-3.9 2.15" stroke="#1f77e6" stroke-width="0.9" fill="none"/>
<path d="M586.1 448.85 l3.9 2.15 l-3.9 2.15" stroke="#1f77e6" stroke-width="0.9" fill="none"/>
<path d="M582.5 461.35 l3.9 2.15 l-3.9 2.15" stroke="#1f77e6" stroke-width="0.9" fill="none"/>
<path d="M586.1 461.35 l3.9 2.15 l-3.9 2.15" stroke="#1f77e6" stroke-width="0.9" fill="none"/>
<path d="M582.5 473.85 l3.9 2.15 l-3.9 2.15" stroke="#1f77e6" stroke-width="0.9" fill="none"/>
<path d="M586.1 473.85 l3.9 2.15 l-3.9 2.15" stroke="#1f77e6" stroke-width="0.9" fill="none"/>
</g></svg>
<div class="a" style="left:338.1px;top:0;width:253.3px;height:430px;overflow:hidden">
<div class="t" style="left:-0.3px;width:100px;text-align:center;top:2px;">KW 38, 14. September</div>
<div class="t" style="left:104.5px;width:100px;text-align:center;top:2px;">KW 39, 21. September</div>
<div class="t" style="left:208.9px;top:2px">KW 40, 28. September</div>
<div class="t" style="left:-2.1px;width:16px;text-align:center;top:12.3px;">14</div>
<div class="t" style="left:11.25px;width:16px;text-align:center;top:12.3px;">15</div>
<div class="t" style="left:26.25px;width:16px;text-align:center;top:12.3px;">16</div>
<div class="t" style="left:41.25px;width:16px;text-align:center;top:12.3px;">17</div>
<div class="t" style="left:56.25px;width:16px;text-align:center;top:12.3px;">18</div>
<div class="t" style="left:71.25px;width:16px;text-align:center;top:12.3px;">19</div>
<div class="t" style="left:86.25px;width:16px;text-align:center;top:12.3px;">20</div>
<div class="t" style="left:101.25px;width:16px;text-align:center;top:12.3px;">21</div>
<div class="t" style="left:116.25px;width:16px;text-align:center;top:12.3px;">22</div>
<div class="t" style="left:131.25px;width:16px;text-align:center;top:12.3px;">23</div>
<div class="t" style="left:146.25px;width:16px;text-align:center;top:12.3px;">24</div>
<div class="t" style="left:161.25px;width:16px;text-align:center;top:12.3px;">25</div>
<div class="t" style="left:176.25px;width:16px;text-align:center;top:12.3px;">26</div>
<div class="t" style="left:191.25px;width:16px;text-align:center;top:12.3px;">27</div>
<div class="t" style="left:206.25px;width:16px;text-align:center;top:12.3px;">28</div>
<div class="t" style="left:221.25px;width:16px;text-align:center;top:12.3px;">29</div>
<div class="t" style="left:236.25px;width:16px;text-align:center;top:12.3px;">30</div>
<div class="gl" style="right:157.6px;top:24.15px">Kundenwebseite</div>
<div class="gl" style="right:157.6px;top:36.65px">Vorbereitung</div>
<div class="gl" style="right:160px;top:53.12px">Start Kunden-Arbeitsbereich</div>
<div class="gl" style="left:115.7px;top:53.12px">Kunde; Projektmanager; Designer; Entwickler</div>
<div class="gl" style="right:162.2px;top:73.58px">Kunden-Fragebogen und Ziele</div>
<div class="gl" style="left:119.3px;top:73.58px">Kunde; Projektmanager</div>
<div class="gl" style="right:154.8px;top:90.05px">Nutzungsszenarien</div>
<div class="gl" style="left:127.1px;top:90.05px">Kunde; Produktmanager</div>
<div class="gl" style="right:140.6px;top:102.55px">Vergleichsanalyse</div>
<div class="gl" style="left:141.5px;top:102.55px">Produktmanager</div>
<div class="gl" style="right:132.2px;top:115.05px">Technische Spezifikationen</div>
<div class="gl" style="left:149.7px;top:115.05px">Entwickler; Produktmanager</div>
<div class="gl" style="right:118px;top:127.55px">Angebotserstellung</div>
<div class="gl" style="left:179.3px;top:127.55px">Projektmanager</div>
<div class="gl" style="right:88px;top:140.05px">Zeitplan erstellen</div>
<div class="gl" style="left:224.5px;top:140.05px">Projektmanager</div>
<div class="gl" style="right:43.1px;top:152.55px">Aufgabenliste erstellen</div>
<div class="gl" style="left:239.5px;top:152.55px">Projektmanager</div>
<div class="gl" style="right:28px;top:165.05px">Inhaltstabelle erstellen</div>
<div class="gl" style="right:4.5px;top:181.52px">Kommunikationswege definieren</div>
<div class="gl" style="left:218px;top:198px">Sitemap erstellen</div>
<div class="gl" style="left:193.5px;top:210.5px">Vorbereitung abgeschlossen</div>
<div class="gl" style="left:245.3px;top:251.98px">Kundenprüfung und Designauswahl</div>
</div>
</div>
<div class="t" style="left:656.7px;top:34.9px;font-size:6.3px;color:#8d8789">Vorgang:</div>
<div class="t" style="left:684.2px;top:34.9px;font-size:6.4px;color:#fff;-webkit-text-stroke:0.2px #fff">Anmerkungen</div>
<div class="a" style="left:604.4px;top:47px;width:157.3px;height:19.8px;background:#5c5658;border-radius:2.5px;overflow:hidden"><div class="a" style="left:132.4px;top:0;width:25px;height:20px;background:#918c8e"></div></div>
<svg class="a" style="left:598px;top:44px" width="170" height="26" viewBox="598 43.6 170 26">
<path d="M613.1 53.2 H621.5 V61.6 H613.1 Z" fill="#fff"/><path d="M615.4 53.2 L617.3 50.8 L619.2 53.2 Z M614.6 52.3 H620 V53.6 H614.6 Z" fill="#fff"/><path d="M615 57.3 L616.8 59.2 L620 55.3" stroke="#4a4446" stroke-width="1" fill="none"/>
<g transform="translate(644 56.7) rotate(-45)" stroke="#fff" stroke-width="0.95" fill="none"><rect x="-6" y="-2.1" width="7" height="4.2" rx="2.1"/><rect x="-1" y="-2.1" width="7" height="4.2" rx="2.1"/></g>
<g stroke="#fff" stroke-width="1" fill="none"><path d="M666.5 52.4 H673.8 M667.5 54.6 H672.8 M667.5 56.8 H672 M667.5 59 H671 M666.5 61.4 H671"/></g><circle cx="673.9" cy="59.5" r="2.9" fill="#fff" stroke="#5c5658" stroke-width="0.5"/><path d="M673.9 57.7 V61.3 M674.8 58.5 Q673.2 57.9 673.1 59 Q673.3 59.6 674.6 59.8 Q674.9 60.9 673 60.6" stroke="#4a4446" stroke-width="0.45" fill="none"/>
<path d="M696.5 51.7 A5 5 0 1 0 700.9 53" stroke="#fff" stroke-width="1.1" fill="none"/><path d="M698.6 50.3 L696.3 51.8 L698.8 53.2 Z" fill="#fff"/>
<circle cx="696.3" cy="55.5" r="0.85" stroke="#fff" stroke-width="0.55" fill="none"/><circle cx="699.3" cy="58.6" r="0.85" stroke="#fff" stroke-width="0.55" fill="none"/><path d="M699.6 54.8 L696 59.3" stroke="#fff" stroke-width="0.6"/>
<rect x="719" y="52.2" width="6.6" height="2" rx="0.4" fill="#fff"/><rect x="726.6" y="52.2" width="2.3" height="2" rx="0.4" fill="#fff"/>
<rect x="719" y="56.1" width="6.6" height="2" rx="0.4" fill="#fff"/><rect x="726.6" y="56.1" width="2.3" height="2" rx="0.4" fill="#fff"/>
<rect x="719" y="60" width="6.6" height="2" rx="0.4" fill="#fff"/><rect x="726.6" y="60" width="2.3" height="2" rx="0.4" fill="#fff"/>
<rect x="745.4" y="51.9" width="10.1" height="9.9" fill="#fff"/><path d="M747.3 60.2 L747.9 58.4 L753.4 52.9 L754.6 54.1 L749.1 59.6 Z" fill="#6e686a"/>
</svg>
<div class="a" style="left:604.4px;top:72.5px;width:157.3px;height:12px;background:#5c5658;border-radius:2.3px;overflow:hidden"><div class="a" style="left:0;top:0;width:78.8px;height:12.2px;background:#918c8e"></div></div>
<div class="t" style="left:604.4px;width:78.8px;text-align:center;top:74.5px;font-size:6.4px;color:#fff">Kommentare</div>
<div class="t" style="left:683.2px;width:78.5px;text-align:center;top:74.5px;font-size:6.4px;color:#fff">Notizen</div>
<div class="card" style="top:91.8px;height:57.9px"><svg width="17.5" height="18.2" viewBox="0 0 34 36"><defs><clipPath id="a1"><rect width="34" height="36" rx="3.2"/></clipPath><filter id="b1" x="-10%" y="-10%" width="120%" height="120%"><feGaussianBlur stdDeviation="1.1"/></filter></defs><g clip-path="url(#a1)"><rect width="34" height="36" fill="#efeee2"/><g filter="url(#b1)"><rect x="-3" y="-3" width="40" height="42" fill="#efeee2"/><ellipse cx="3" cy="3" rx="4.5" ry="4.5" fill="#6d563c"/><ellipse cx="1.5" cy="14" rx="3" ry="4.5" fill="#8e9c62"/><ellipse cx="31.5" cy="23" rx="4" ry="9" fill="#b1c288"/><ellipse cx="14" cy="3" rx="6" ry="3" fill="#fbfbf6"/><path d="M-1 38 C-1 27 4 22 5 16 C6 9 11 6.500 16 6.500 C22 6.500 25 10 26 16 C27 24 28 30 30 38 Z" fill="#472a21"/><ellipse cx="16" cy="18.500" rx="4.700" ry="6.700" fill="#d9a58b"/><path d="M13.500 22.300 Q16 24 18.500 22.300" stroke="#b4595c" stroke-width="1" fill="none"/><path d="M1 38 C3 31.500 8 30.500 12 30.500 L16 33.500 L21 30.500 L23.500 38 Z" fill="#e4679f"/></g></g></svg><div class="n">Produktmanager</div><div class="d">22.09.20, 01:30</div><div class="x">Der Kunde hat das mit den Nutzungsszenarien<br>nicht richtig verstanden und möchte jetzt im<br>zweiten Anlauf ein besseres Dokument liefern.<br>Dafür braucht er aber sicher noch zwei Tage.</div></div>
<div class="card" style="top:154.5px;height:44.1px"><svg width="17.3" height="18.3" viewBox="0 0 34 36"><defs><clipPath id="a2"><rect width="34" height="36" rx="3.2"/></clipPath><filter id="b2" x="-10%" y="-10%" width="120%" height="120%"><feGaussianBlur stdDeviation="0.8"/></filter></defs><g clip-path="url(#a2)"><rect width="34" height="36" fill="#eff0f2"/><g filter="url(#b2)"><path d="M4 38 C6 28 12 26 16 25 L24 20 C31 22 35 28 36 38 Z" fill="#2d76a3"/><path d="M13 25 L17 38 L22 38 L19 24 Z" fill="#1d2228"/><ellipse cx="15.5" cy="16.5" rx="5.6" ry="7.8" fill="#d6b09b" transform="rotate(-10 15.5 16.5)"/><path d="M8 14 C7 5 19 3 23 9 L23 15 C20 10 12 9 9.5 15 Z" fill="#35261f"/><ellipse cx="12.8" cy="15.5" rx="1.3" ry="0.9" fill="#5b4338"/><ellipse cx="17.8" cy="14.8" rx="1.3" ry="0.9" fill="#5b4338"/></g></g></svg><div class="n">Entwickler</div><div class="d">22.09.20, 01:42</div><div class="x">Das habe ich mir schon gedacht <span style="display:inline-block;width:6.8px;height:6.8px;margin:0 0.6px 0 0.3px;border-radius:50%;background:#f3c13a;vertical-align:-1.3px;position:relative"><span style="position:absolute;left:1.3px;top:2.2px;width:4.2px;height:0.7px;background:#7a4e10"></span></span>. Der erste<br>Versuch war nicht sehr zielführend.</div></div>
<div class="card" style="top:203.4px;height:51.3px"><svg width="17.3" height="18.3" viewBox="0 0 34 36"><defs><clipPath id="a3"><rect width="34" height="36" rx="3.2"/></clipPath><filter id="b3" x="-10%" y="-10%" width="120%" height="120%"><feGaussianBlur stdDeviation="0.8"/></filter></defs><g clip-path="url(#a3)"><rect width="34" height="36" fill="#f2f2f3"/><g filter="url(#b3)"><path d="M2 38 C1 18 6 8 17 8 C28 8 31 20 30 38 Z" fill="#120d0c"/><ellipse cx="17" cy="24" rx="7" ry="10.5" fill="#c76a30"/><path d="M10 19 C12 12 22 12 24 19 C20 15.5 14 15.5 10 19 Z" fill="#120d0c"/><path d="M11 21.5 H23" stroke="#6a3418" stroke-width="1.3"/><ellipse cx="17" cy="30.5" rx="3.2" ry="1.7" fill="#f5ece6"/><path d="M6 38 L10 33 L13 38 Z M28 38 L24 33 L21 38 Z" fill="#a5afb7"/></g></g></svg><div class="n">Designer</div><div class="d">22.09.20, 02:06</div><div class="x">Hey <b>Projektmanager</b>, kannst du dem Kunden nicht<br>das Dokument vom letzten Mal senden? Das war<br>super ausgearbeitet!</div></div>
<div class="card" style="top:259.5px;height:36.8px"><svg width="17.3" height="18.3" viewBox="0 0 34 36"><defs><clipPath id="a4"><rect width="34" height="36" rx="3.2"/></clipPath><filter id="b4" x="-10%" y="-10%" width="120%" height="120%"><feGaussianBlur stdDeviation="0.8"/></filter></defs><g clip-path="url(#a4)"><rect width="34" height="36" fill="#e8e1d3"/><g filter="url(#b4)"><rect x="-2" y="-2" width="38" height="40" fill="#e8e1d3"/><rect x="12" y="-2" width="3" height="16" fill="#cfc6b5"/><rect x="17" y="-2" width="9" height="14" fill="#f1ece1"/><rect x="27" y="-2" width="9" height="40" fill="#d3c9b6"/><path d="M4 38 C2 22 6 10 16 10 C26 10 29 22 31 38 Z" fill="#48312a"/><ellipse cx="16" cy="22" rx="5.8" ry="7.8" fill="#c79277"/><path d="M10 19 C12 13 20 13 22 19 C19 16.5 13 16.5 10 19 Z" fill="#3a261e"/><path d="M13.5 38 L14 28 C15 25.5 18 25.5 18.4 28.5 L19.5 38 Z" fill="#d4a388"/><path d="M7 38 L12 34 L21 34 L25 38 Z" fill="#b6bebb"/></g></g></svg><div class="n">Projektmanager</div><div class="d">22.09.20, 02:48</div><div class="x">Nein <b>Designer</b>, das ist leider unter NDA!</div></div>
<div class="a" style="left:604.4px;top:458.2px;width:129.7px;height:16.2px;background:#5c5658;border-radius:2.3px"></div>
<div class="t" style="left:604.4px;width:129.7px;text-align:center;top:462.5px;font-size:6.4px;color:#fff">Neuer Kommentar</div>
<div class="a" style="left:738.8px;top:458.2px;width:23.2px;height:16.2px;background:#5c5658;border-radius:2.3px"></div>
<svg class="a" style="left:738.8px;top:458.2px" width="23.2" height="16.2" viewBox="0 0 23.2 16.2"><circle cx="9.4" cy="8.1" r="3.2" stroke="#e6e2e4" stroke-width="0.6" fill="none"/><path d="M7.6 8.1 H11.2" stroke="#e6e2e4" stroke-width="0.9" stroke-dasharray="0.9 0.45"/><path d="M14.6 7.5 l1.3 1.3 l1.3 -1.3" stroke="#e6e2e4" stroke-width="0.6" fill="none"/></svg>
<div class="a" style="left:230px;top:290.6px;width:298.1px;height:150.4px;background:#fff;border-radius:3.5px 3.5px 2px 2px;box-shadow:0 3px 11px rgba(0,0,0,0.2),0 0 0 0.5px rgba(0,0,0,0.13);overflow:hidden">
<div class="a" style="left:0px;top:0px;width:298.1px;height:57.5px;background:#f5edf0"></div>
<div class="a" style="left:0px;top:10.5px;width:298.1px;height:0.5px;background:#eae2e6"></div>
<div class="a" style="left:0px;top:28.7px;width:298.1px;height:0.5px;background:#e7dfe3"></div>
<div class="a" style="left:0px;top:45.7px;width:298.1px;height:0.5px;background:#ddd5d9"></div>
<div class="a" style="left:0px;top:46.2px;width:298.1px;height:11.3px;background:#f2eaed"></div>
<div class="a" style="left:0px;top:57.4px;width:298.1px;height:0.5px;background:#ddd5d9"></div>
<div class="a" style="left:2.75px;top:2.15px;width:5.3px;height:5.3px;border-radius:50%;background:#fe5f57"></div>
<div class="a" style="left:10.85px;top:2.15px;width:5.3px;height:5.3px;border-radius:50%;background:#febc2e"></div>
<div class="a" style="left:19.05px;top:2.15px;width:5.3px;height:5.3px;border-radius:50%;background:#28c840"></div>
<div class="nt" style="left:0;width:298.1px;text-align:center;top:1px;color:#4a4547;-webkit-text-stroke:0">Notifikationen</div>
<div class="a" style="left:63.6px;top:15.1px;width:171.2px;height:8.7px;background:#e9e0e4;border-radius:2.2px"></div>
<div class="a" style="left:63.9px;top:15.4px;width:40.8px;height:8.1px;background:#fff;border-radius:2px;box-shadow:0 0.3px 0.8px rgba(0,0,0,0.3)"></div>
<div class="a" style="left:134.3px;top:17px;width:0.5px;height:5px;background:#dbd2d6"></div>
<div class="a" style="left:160.4px;top:17px;width:0.5px;height:5px;background:#dbd2d6"></div>
<div class="a" style="left:185.2px;top:17px;width:0.5px;height:5px;background:#dbd2d6"></div>
<div class="nt" style="left:44.3px;width:80px;text-align:center;top:15.7px">Kommentare</div>
<div class="nt" style="left:79.8px;width:80px;text-align:center;top:15.7px">Planung</div>
<div class="nt" style="left:107.4px;width:80px;text-align:center;top:15.7px">Import</div>
<div class="nt" style="left:132.8px;width:80px;text-align:center;top:15.7px">Export</div>
<div class="nt" style="left:170px;width:80px;text-align:center;top:15.7px">Veröffentlichen</div>
<div class="a" style="left:5.5px;top:34.7px;width:6.5px;height:6.5px;background:#fff;border:1px solid #d9d1d5;border-radius:1.6px"></div>
<div class="nt" style="left:14.8px;top:34.4px;">Dieses Fenster öffnen, wenn neue Kommentare auftreten</div>
<svg class="a" style="left:285.6px;top:33.4px" width="8" height="8" viewBox="0 0 8 8"><path d="M6.6 4.2 A2.6 2.6 0 1 1 4 1.6" stroke="#c9c1c5" stroke-width="0.55" fill="none"/><path d="M3.6 0.5 L5.2 1.6 L3.6 2.7 Z" fill="#c9c1c5"/></svg>
<div class="a" style="left:16.4px;top:46.2px;width:0.5px;height:11.2px;background:#dcd3d7"></div>
<div class="a" style="left:96.4px;top:46.2px;width:0.5px;height:11.2px;background:#dcd3d7"></div>
<div class="a" style="left:167.4px;top:46.2px;width:0.5px;height:11.2px;background:#dcd3d7"></div>
<div class="nt" style="left:20px;top:48.1px;">Quelle</div>
<div class="nt" style="left:99.8px;top:48.1px;">Autor</div>
<div class="nt" style="left:171px;top:48.1px;">Kommentar</div>
<div class="a" style="left:5.4px;top:67.9px;width:5px;height:5px;border-radius:50%;background:#1877f0"></div>
<div class="nt" style="left:20px;top:66.7px;">Nutzungsszenarien</div>
<div class="nt" style="left:99.8px;top:66.7px;">Designer</div>
<div class="a" style="left:5.4px;top:85.2px;width:5px;height:5px;border-radius:50%;background:#1877f0"></div>
<div class="nt" style="left:20px;top:84px;">Nutzungsszenarien</div>
<div class="nt" style="left:99.8px;top:84px;">Projektmanager</div>
<div class="nt" style="left:171px;top:59.6px;">Hey Projektmanager, kannst du dem</div>
<div class="nt" style="left:171px;top:66.8px;">Kunden nicht das Dokument vom letzten</div>
<div class="nt" style="left:171px;top:73.4px;">Mal senden? Das war super ausgearbeitet!</div>
<div class="nt" style="left:171px;top:84px;">Nein Designer, das ist leider unter NDA!</div>
</div>
</div></body></html>
